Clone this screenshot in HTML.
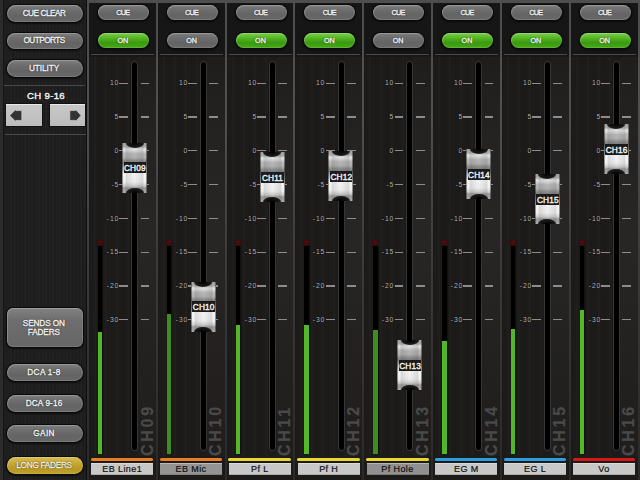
<!DOCTYPE html><html><head><meta charset="utf-8"><style>
*{margin:0;padding:0;box-sizing:border-box}
html,body{width:640px;height:480px;overflow:hidden;background:#111}
body{position:relative;font-family:"Liberation Sans",sans-serif}
.abs{position:absolute}
#left{position:absolute;left:0;top:0;width:87px;height:480px;
 background:repeating-linear-gradient(90deg,#202020 0 2px,#1c1c1c 2px 3px,#212121 3px 5px,#1d1d1d 5px 7px);}
#leftedge{position:absolute;left:0;top:0;width:3px;height:480px;background:#2c2c2c;box-shadow:1px 0 1px #141414}
.pill{position:absolute;border-radius:9px;color:#f4f4f4;font-weight:normal;-webkit-text-stroke:0.35px #f4f4f4;text-align:center;letter-spacing:-0.3px;
 background:linear-gradient(#7e7e7e 0%,#6e6e6e 30%,#646464 65%,#686868 100%);
 box-shadow:0 0 0 1px #0a0a0a,0 1px 2px 1px rgba(0,0,0,.6),inset 0 0 0 1px rgba(255,255,255,.12),inset 1px 1px 1px rgba(255,255,255,.12);text-shadow:0 0 1.5px rgba(0,0,0,.9),0 0 1px rgba(0,0,0,.7)}
.green{background:linear-gradient(#7ad04a 0%,#4fb01e 40%,#3a9a10 65%,#48a818 100%);color:#f0fff0}
.gold{background:linear-gradient(#d8bc50 0%,#c8a830 40%,#b89820 70%,#c0a030 100%);color:#f2e8c4}
.div{position:absolute;top:0;width:2px;height:480px;box-shadow:-1px 0 1px rgba(0,0,0,.5),1px 0 1px rgba(0,0,0,.5);background:linear-gradient(#4e4e4e 0,#505050 120px,#3c3c3c 250px,#333 360px,#2a2a2a 470px)}
.strip{position:absolute;top:0;height:480px;background:#1c1b1a}
.top{position:absolute;left:0;top:0;right:0;height:54px;background:#161616}
.sep{position:absolute;height:1px;background:#4a4a4a}
.track{position:absolute;width:5px;background:#000;border-radius:2.5px;box-shadow:0 0 0 1px #363636}
.mk{position:absolute;font-size:13.5px;color:#b4b4b4;text-shadow:0 0 2px #000;text-align:right;width:48px;letter-spacing:1.6px;line-height:13px;transform:scale(0.5);transform-origin:100% 50%}
.dash{position:absolute;height:1.3px;background:#8c8c8c}
.meter{position:absolute;width:4.4px;background:#000;box-shadow:1px 0 1px rgba(0,0,0,.4)}
.green-m{position:absolute;width:4.4px;background:#52b828}
.led{position:absolute;width:6px;height:5px;border-radius:3px;background:#4a0c0c;box-shadow:0 0 1px #300}
.chv{position:absolute;font-weight:bold;font-size:16px;color:#4a4a4a;letter-spacing:2.75px;-webkit-text-stroke:0.2px #4a4a4a;
 transform-origin:0 0;transform:rotate(-90deg);white-space:nowrap;line-height:12px}
.cbar{position:absolute;height:3.5px;border-radius:2px}
.name{position:absolute;height:12.5px;font-size:9px;color:#111;text-align:center;line-height:13px;letter-spacing:0.4px;-webkit-text-stroke:0.2px #111;
 box-shadow:inset 0 1px 0 rgba(255,255,255,.35),inset 0 -1px 0 rgba(0,0,0,.15)}
.knob{position:absolute;width:25px;height:50px;overflow:hidden;
 background:linear-gradient(90deg,#3a3a3a 0,#e8e8e8 1px,#fff 2px,#dcdcdc 4.5px,#f4f4f4 50%,#dcdcdc 20.5px,#fff 23px,#e8e8e8 24px,#3a3a3a 25px),
 linear-gradient(180deg,#a4a4a4 0,#b4b4b4 4px,#ececec 6px,#dedede 8px,#c0c0c0 10.5px,#b8b8b8 14.5px,#959595 17.5px,#858585 19.8px,#fff 30.6px,#f8f8f8 39px,#d4d4d4 43px,#a0a0a0 45px,#b0b0b0 50px);
 background-blend-mode:multiply}
.klab{position:absolute;left:1.5px;right:1px;top:19.8px;height:10.8px;background:#1a1a1a;color:#f0f0f0;
 font-size:8.3px;font-weight:normal;-webkit-text-stroke:0.4px #f0f0f0;text-align:center;line-height:12px;letter-spacing:0.15px;text-indent:0.15px;overflow:hidden;white-space:nowrap}
.kcap{position:absolute;left:3.5px;width:18px;height:10px;border-radius:50%;background:radial-gradient(ellipse at 50% 50%,#000 0,#1a1a1a 60%,#2a2a2a 100%)}
</style></head><body>
<div id="left"></div><div id="leftedge"></div>
<div class="pill " style="left:6.5px;top:5px;width:76.5px;height:17px;font-size:8.2px;line-height:17px;letter-spacing:-0.45px;"><span style="position:relative;top:0px;left:-0.7px">CUE CLEAR</span></div>
<div class="pill " style="left:6.5px;top:32.5px;width:76.5px;height:16.5px;font-size:8.2px;line-height:16.5px;letter-spacing:-0.5px;"><span style="position:relative;top:0.4px;left:-0.7px">OUTPORTS</span></div>
<div class="pill " style="left:6.5px;top:60px;width:76.5px;height:17px;font-size:8.2px;line-height:17px;letter-spacing:-0.05px;"><span style="position:relative;top:-0.3px;left:-0.7px">UTILITY</span></div>
<div class="sep" style="left:4px;top:85px;width:81px;height:1px"></div>
<div class="abs" style="left:2px;top:89.6px;width:88px;text-align:center;font-size:9.6px;font-weight:normal;color:#f4f4f4;-webkit-text-stroke:0.4px #f4f4f4;line-height:12px;letter-spacing:0.3px;text-shadow:0 0 1px #000">CH 9-16</div>
<div class="abs" style="left:6px;top:104px;width:35.5px;height:22.3px;background:linear-gradient(#c8c8c8,#bcbcbc);box-shadow:0 0 0 1px #111,inset 0 1px 0 #e8e8e8"></div>
<div class="abs" style="left:50px;top:104px;width:35px;height:22.3px;background:linear-gradient(#c8c8c8,#bcbcbc);box-shadow:0 0 0 1px #111,inset 0 1px 0 #e8e8e8"></div>
<svg class="abs" style="left:0;top:0" width="88" height="140"><path d="M9.8,115.5 L15.8,109.3 L15.8,110.6 L21.8,110.6 L21.8,120.4 L15.8,120.4 L15.8,121.7 Z" fill="#333" stroke="#ddd" stroke-width="0.6"/><path d="M81,115.5 L75.5,109.3 L75.5,110.6 L69.8,110.6 L69.8,120.4 L75.5,120.4 L75.5,121.7 Z" fill="#333" stroke="#ddd" stroke-width="0.6"/></svg>
<div class="sep" style="left:5px;top:133.5px;width:81px;height:1.5px"></div>
<div class="pill " style="left:6.5px;top:307.5px;width:76px;height:39.7px;font-size:8.2px;line-height:39.7px;letter-spacing:-0.1px;border-radius:6px;line-height:9px;padding-top:11.6px;background:linear-gradient(#828282 0,#6e6e6e 12px,#666 100%)"><span style="position:relative;top:0px;left:-0.7px">SENDS ON<br>FADERS</span></div>
<div class="pill " style="left:6.5px;top:364px;width:76.5px;height:17px;font-size:8.2px;line-height:17px;letter-spacing:0.35px;"><span style="position:relative;top:-0.4px;left:-0.7px">DCA 1-8</span></div>
<div class="pill " style="left:6.5px;top:395px;width:76.5px;height:17px;font-size:8.2px;line-height:17px;letter-spacing:0.15px;"><span style="position:relative;top:0px;left:-0.7px">DCA 9-16</span></div>
<div class="pill " style="left:6.5px;top:425px;width:76.5px;height:17px;font-size:8.2px;line-height:17px;letter-spacing:0.4px;"><span style="position:relative;top:0px;left:-0.7px">GAIN</span></div>
<div class="pill gold" style="left:6.5px;top:456.5px;width:76.5px;height:17px;font-size:8.2px;line-height:17px;letter-spacing:-0.25px;"><span style="position:relative;top:0px;left:-0.7px">LONG FADERS</span></div>
<div class="div" style="left:87.0px"></div>
<div class="div" style="left:155.82999999999998px"></div>
<div class="div" style="left:224.66px"></div>
<div class="div" style="left:293.49px"></div>
<div class="div" style="left:362.32px"></div>
<div class="div" style="left:431.15px"></div>
<div class="div" style="left:499.98px"></div>
<div class="div" style="left:568.81px"></div>
<div class="abs" style="left:637px;top:0;width:3px;height:480px;background:linear-gradient(#4e4e4e 0,#505050 120px,#3c3c3c 250px,#333 360px,#2a2a2a 470px)"></div>
<div class="abs" style="left:87px;top:0;width:553px;height:3px;background:#4e4e4e"></div>
<div class="strip" style="left:89.0px;top:3px;width:66.83px;height:477px"><div class="top"></div><div class="pill " style="left:9px;top:2px;width:51px;height:15px;font-size:7.2px;line-height:15px;letter-spacing:-0.7px;"><span style="position:relative;top:0px;left:-0.7px">CUE</span></div><div class="pill green" style="left:9px;top:30px;width:51px;height:15px;font-size:7.2px;line-height:15px;letter-spacing:0px;"><span style="position:relative;top:0px;left:-0.7px">ON</span></div><div class="sep" style="left:2px;top:51px;width:63px"></div></div>
<div class="abs" style="left:138.0px;top:56px;width:17.83px;height:400px;background:linear-gradient(rgba(255,255,255,.01) 0,rgba(255,255,255,.035) 80px,rgba(255,255,255,.05) 180px,rgba(255,255,255,.03) 280px,rgba(255,255,255,.01) 400px)"></div>
<div class="abs" style="left:89.0px;top:56px;width:42px;height:400px;background:repeating-linear-gradient(90deg,rgba(0,0,0,.07) 0 1px,transparent 1px 5px,rgba(255,255,255,.015) 5px 7px,transparent 7px 11px)"></div>
<div class="track" style="left:132.1px;top:61.5px;height:388.5px"></div>
<div class="mk" style="left:71.0px;top:76.4px">10</div>
<div class="dash" style="left:119.25px;top:82.55px;width:8.8px"></div>
<div class="dash" style="left:140.5px;top:82.55px;width:8.8px"></div>
<div class="mk" style="left:71.0px;top:110.2px">5</div>
<div class="dash" style="left:119.25px;top:116.35px;width:8.8px"></div>
<div class="dash" style="left:140.5px;top:116.35px;width:8.8px"></div>
<div class="mk" style="left:71.0px;top:144.0px">0</div>
<div class="dash" style="left:119.25px;top:150.15px;width:8.8px"></div>
<div class="dash" style="left:140.5px;top:150.15px;width:8.8px"></div>
<div class="mk" style="left:71.0px;top:177.79999999999998px">-5</div>
<div class="dash" style="left:119.25px;top:183.95px;width:8.8px"></div>
<div class="dash" style="left:140.5px;top:183.95px;width:8.8px"></div>
<div class="mk" style="left:71.0px;top:211.6px">-10</div>
<div class="dash" style="left:119.25px;top:217.75px;width:8.8px"></div>
<div class="dash" style="left:140.5px;top:217.75px;width:8.8px"></div>
<div class="mk" style="left:71.0px;top:245.39999999999998px">-15</div>
<div class="dash" style="left:119.25px;top:251.54999999999998px;width:8.8px"></div>
<div class="dash" style="left:140.5px;top:251.54999999999998px;width:8.8px"></div>
<div class="mk" style="left:71.0px;top:279.2px">-20</div>
<div class="dash" style="left:119.25px;top:285.35px;width:8.8px"></div>
<div class="dash" style="left:140.5px;top:285.35px;width:8.8px"></div>
<div class="mk" style="left:71.0px;top:313.0px">-30</div>
<div class="dash" style="left:119.25px;top:319.15000000000003px;width:8.8px"></div>
<div class="dash" style="left:140.5px;top:319.15000000000003px;width:8.8px"></div>
<div class="led" style="left:97.0px;top:240px"></div>
<div class="meter" style="left:98.0px;top:246px;height:208px"></div>
<div class="green-m" style="left:98.0px;top:331.7px;height:122.30000000000001px;background:#52b828"></div>
<div class="chv" style="left:141.5px;top:456px">CH09</div>
<div class="cbar" style="left:90.75px;top:457.5px;width:62.5px;background:#ea7e20"></div>
<div class="name" style="left:91.2px;top:462.5px;width:62px;background:#c8c8c8">EB Line1</div>
<div class="knob" style="left:122.0px;top:142.5px"><div class="kcap" style="top:-5px"></div><div class="kcap" style="bottom:-5px"></div><div class="klab">CH09</div></div>
<div class="strip" style="left:157.82999999999998px;top:3px;width:66.83px;height:477px"><div class="top"></div><div class="pill " style="left:9px;top:2px;width:51px;height:15px;font-size:7.2px;line-height:15px;letter-spacing:-0.7px;"><span style="position:relative;top:0px;left:-0.7px">CUE</span></div><div class="pill " style="left:9px;top:30px;width:51px;height:15px;font-size:7.2px;line-height:15px;letter-spacing:0px;"><span style="position:relative;top:0px;left:-0.7px">ON</span></div><div class="sep" style="left:2px;top:51px;width:63px"></div></div>
<div class="abs" style="left:206.82999999999998px;top:56px;width:17.83px;height:400px;background:linear-gradient(rgba(255,255,255,.01) 0,rgba(255,255,255,.035) 80px,rgba(255,255,255,.05) 180px,rgba(255,255,255,.03) 280px,rgba(255,255,255,.01) 400px)"></div>
<div class="abs" style="left:157.82999999999998px;top:56px;width:42px;height:400px;background:repeating-linear-gradient(90deg,rgba(0,0,0,.07) 0 1px,transparent 1px 5px,rgba(255,255,255,.015) 5px 7px,transparent 7px 11px)"></div>
<div class="track" style="left:200.92999999999998px;top:61.5px;height:388.5px"></div>
<div class="mk" style="left:139.82999999999998px;top:76.4px">10</div>
<div class="dash" style="left:188.07999999999998px;top:82.55px;width:8.8px"></div>
<div class="dash" style="left:209.32999999999998px;top:82.55px;width:8.8px"></div>
<div class="mk" style="left:139.82999999999998px;top:110.2px">5</div>
<div class="dash" style="left:188.07999999999998px;top:116.35px;width:8.8px"></div>
<div class="dash" style="left:209.32999999999998px;top:116.35px;width:8.8px"></div>
<div class="mk" style="left:139.82999999999998px;top:144.0px">0</div>
<div class="dash" style="left:188.07999999999998px;top:150.15px;width:8.8px"></div>
<div class="dash" style="left:209.32999999999998px;top:150.15px;width:8.8px"></div>
<div class="mk" style="left:139.82999999999998px;top:177.79999999999998px">-5</div>
<div class="dash" style="left:188.07999999999998px;top:183.95px;width:8.8px"></div>
<div class="dash" style="left:209.32999999999998px;top:183.95px;width:8.8px"></div>
<div class="mk" style="left:139.82999999999998px;top:211.6px">-10</div>
<div class="dash" style="left:188.07999999999998px;top:217.75px;width:8.8px"></div>
<div class="dash" style="left:209.32999999999998px;top:217.75px;width:8.8px"></div>
<div class="mk" style="left:139.82999999999998px;top:245.39999999999998px">-15</div>
<div class="dash" style="left:188.07999999999998px;top:251.54999999999998px;width:8.8px"></div>
<div class="dash" style="left:209.32999999999998px;top:251.54999999999998px;width:8.8px"></div>
<div class="mk" style="left:139.82999999999998px;top:279.2px">-20</div>
<div class="dash" style="left:188.07999999999998px;top:285.35px;width:8.8px"></div>
<div class="dash" style="left:209.32999999999998px;top:285.35px;width:8.8px"></div>
<div class="mk" style="left:139.82999999999998px;top:313.0px">-30</div>
<div class="dash" style="left:188.07999999999998px;top:319.15000000000003px;width:8.8px"></div>
<div class="dash" style="left:209.32999999999998px;top:319.15000000000003px;width:8.8px"></div>
<div class="led" style="left:165.82999999999998px;top:240px"></div>
<div class="meter" style="left:166.82999999999998px;top:246px;height:208px"></div>
<div class="green-m" style="left:166.82999999999998px;top:314px;height:140px;background:#3e8e1e"></div>
<div class="chv" style="left:210.32999999999998px;top:456px">CH10</div>
<div class="cbar" style="left:159.57999999999998px;top:457.5px;width:62.5px;background:#ea7e20"></div>
<div class="name" style="left:160.02999999999997px;top:462.5px;width:62px;background:#949494">EB Mic</div>
<div class="knob" style="left:190.82999999999998px;top:281.5px"><div class="kcap" style="top:-5px"></div><div class="kcap" style="bottom:-5px"></div><div class="klab">CH10</div></div>
<div class="strip" style="left:226.66px;top:3px;width:66.83px;height:477px"><div class="top"></div><div class="pill " style="left:9px;top:2px;width:51px;height:15px;font-size:7.2px;line-height:15px;letter-spacing:-0.7px;"><span style="position:relative;top:0px;left:-0.7px">CUE</span></div><div class="pill green" style="left:9px;top:30px;width:51px;height:15px;font-size:7.2px;line-height:15px;letter-spacing:0px;"><span style="position:relative;top:0px;left:-0.7px">ON</span></div><div class="sep" style="left:2px;top:51px;width:63px"></div></div>
<div class="abs" style="left:275.65999999999997px;top:56px;width:17.83px;height:400px;background:linear-gradient(rgba(255,255,255,.01) 0,rgba(255,255,255,.035) 80px,rgba(255,255,255,.05) 180px,rgba(255,255,255,.03) 280px,rgba(255,255,255,.01) 400px)"></div>
<div class="abs" style="left:226.66px;top:56px;width:42px;height:400px;background:repeating-linear-gradient(90deg,rgba(0,0,0,.07) 0 1px,transparent 1px 5px,rgba(255,255,255,.015) 5px 7px,transparent 7px 11px)"></div>
<div class="track" style="left:269.76px;top:61.5px;height:388.5px"></div>
<div class="mk" style="left:208.65999999999997px;top:76.4px">10</div>
<div class="dash" style="left:256.90999999999997px;top:82.55px;width:8.8px"></div>
<div class="dash" style="left:278.15999999999997px;top:82.55px;width:8.8px"></div>
<div class="mk" style="left:208.65999999999997px;top:110.2px">5</div>
<div class="dash" style="left:256.90999999999997px;top:116.35px;width:8.8px"></div>
<div class="dash" style="left:278.15999999999997px;top:116.35px;width:8.8px"></div>
<div class="mk" style="left:208.65999999999997px;top:144.0px">0</div>
<div class="dash" style="left:256.90999999999997px;top:150.15px;width:8.8px"></div>
<div class="dash" style="left:278.15999999999997px;top:150.15px;width:8.8px"></div>
<div class="mk" style="left:208.65999999999997px;top:177.79999999999998px">-5</div>
<div class="dash" style="left:256.90999999999997px;top:183.95px;width:8.8px"></div>
<div class="dash" style="left:278.15999999999997px;top:183.95px;width:8.8px"></div>
<div class="mk" style="left:208.65999999999997px;top:211.6px">-10</div>
<div class="dash" style="left:256.90999999999997px;top:217.75px;width:8.8px"></div>
<div class="dash" style="left:278.15999999999997px;top:217.75px;width:8.8px"></div>
<div class="mk" style="left:208.65999999999997px;top:245.39999999999998px">-15</div>
<div class="dash" style="left:256.90999999999997px;top:251.54999999999998px;width:8.8px"></div>
<div class="dash" style="left:278.15999999999997px;top:251.54999999999998px;width:8.8px"></div>
<div class="mk" style="left:208.65999999999997px;top:279.2px">-20</div>
<div class="dash" style="left:256.90999999999997px;top:285.35px;width:8.8px"></div>
<div class="dash" style="left:278.15999999999997px;top:285.35px;width:8.8px"></div>
<div class="mk" style="left:208.65999999999997px;top:313.0px">-30</div>
<div class="dash" style="left:256.90999999999997px;top:319.15000000000003px;width:8.8px"></div>
<div class="dash" style="left:278.15999999999997px;top:319.15000000000003px;width:8.8px"></div>
<div class="led" style="left:234.66px;top:240px"></div>
<div class="meter" style="left:235.66px;top:246px;height:208px"></div>
<div class="green-m" style="left:235.66px;top:325px;height:129px;background:#52b828"></div>
<div class="chv" style="left:279.15999999999997px;top:456px">CH11</div>
<div class="cbar" style="left:228.41px;top:457.5px;width:62.5px;background:#e8d830"></div>
<div class="name" style="left:228.85999999999999px;top:462.5px;width:62px;background:#c8c8c8">Pf L</div>
<div class="knob" style="left:259.65999999999997px;top:152px"><div class="kcap" style="top:-5px"></div><div class="kcap" style="bottom:-5px"></div><div class="klab">CH11</div></div>
<div class="strip" style="left:295.49px;top:3px;width:66.83px;height:477px"><div class="top"></div><div class="pill " style="left:9px;top:2px;width:51px;height:15px;font-size:7.2px;line-height:15px;letter-spacing:-0.7px;"><span style="position:relative;top:0px;left:-0.7px">CUE</span></div><div class="pill green" style="left:9px;top:30px;width:51px;height:15px;font-size:7.2px;line-height:15px;letter-spacing:0px;"><span style="position:relative;top:0px;left:-0.7px">ON</span></div><div class="sep" style="left:2px;top:51px;width:63px"></div></div>
<div class="abs" style="left:344.49px;top:56px;width:17.83px;height:400px;background:linear-gradient(rgba(255,255,255,.01) 0,rgba(255,255,255,.035) 80px,rgba(255,255,255,.05) 180px,rgba(255,255,255,.03) 280px,rgba(255,255,255,.01) 400px)"></div>
<div class="abs" style="left:295.49px;top:56px;width:42px;height:400px;background:repeating-linear-gradient(90deg,rgba(0,0,0,.07) 0 1px,transparent 1px 5px,rgba(255,255,255,.015) 5px 7px,transparent 7px 11px)"></div>
<div class="track" style="left:338.59000000000003px;top:61.5px;height:388.5px"></div>
<div class="mk" style="left:277.49px;top:76.4px">10</div>
<div class="dash" style="left:325.74px;top:82.55px;width:8.8px"></div>
<div class="dash" style="left:346.99px;top:82.55px;width:8.8px"></div>
<div class="mk" style="left:277.49px;top:110.2px">5</div>
<div class="dash" style="left:325.74px;top:116.35px;width:8.8px"></div>
<div class="dash" style="left:346.99px;top:116.35px;width:8.8px"></div>
<div class="mk" style="left:277.49px;top:144.0px">0</div>
<div class="dash" style="left:325.74px;top:150.15px;width:8.8px"></div>
<div class="dash" style="left:346.99px;top:150.15px;width:8.8px"></div>
<div class="mk" style="left:277.49px;top:177.79999999999998px">-5</div>
<div class="dash" style="left:325.74px;top:183.95px;width:8.8px"></div>
<div class="dash" style="left:346.99px;top:183.95px;width:8.8px"></div>
<div class="mk" style="left:277.49px;top:211.6px">-10</div>
<div class="dash" style="left:325.74px;top:217.75px;width:8.8px"></div>
<div class="dash" style="left:346.99px;top:217.75px;width:8.8px"></div>
<div class="mk" style="left:277.49px;top:245.39999999999998px">-15</div>
<div class="dash" style="left:325.74px;top:251.54999999999998px;width:8.8px"></div>
<div class="dash" style="left:346.99px;top:251.54999999999998px;width:8.8px"></div>
<div class="mk" style="left:277.49px;top:279.2px">-20</div>
<div class="dash" style="left:325.74px;top:285.35px;width:8.8px"></div>
<div class="dash" style="left:346.99px;top:285.35px;width:8.8px"></div>
<div class="mk" style="left:277.49px;top:313.0px">-30</div>
<div class="dash" style="left:325.74px;top:319.15000000000003px;width:8.8px"></div>
<div class="dash" style="left:346.99px;top:319.15000000000003px;width:8.8px"></div>
<div class="led" style="left:303.49px;top:240px"></div>
<div class="meter" style="left:304.49px;top:246px;height:208px"></div>
<div class="green-m" style="left:304.49px;top:325px;height:129px;background:#52b828"></div>
<div class="chv" style="left:347.99px;top:456px">CH12</div>
<div class="cbar" style="left:297.24px;top:457.5px;width:62.5px;background:#e8d830"></div>
<div class="name" style="left:297.69px;top:462.5px;width:62px;background:#c8c8c8">Pf H</div>
<div class="knob" style="left:328.49px;top:151px"><div class="kcap" style="top:-5px"></div><div class="kcap" style="bottom:-5px"></div><div class="klab">CH12</div></div>
<div class="strip" style="left:364.32px;top:3px;width:66.83px;height:477px"><div class="top"></div><div class="pill " style="left:9px;top:2px;width:51px;height:15px;font-size:7.2px;line-height:15px;letter-spacing:-0.7px;"><span style="position:relative;top:0px;left:-0.7px">CUE</span></div><div class="pill " style="left:9px;top:30px;width:51px;height:15px;font-size:7.2px;line-height:15px;letter-spacing:0px;"><span style="position:relative;top:0px;left:-0.7px">ON</span></div><div class="sep" style="left:2px;top:51px;width:63px"></div></div>
<div class="abs" style="left:413.32px;top:56px;width:17.83px;height:400px;background:linear-gradient(rgba(255,255,255,.01) 0,rgba(255,255,255,.035) 80px,rgba(255,255,255,.05) 180px,rgba(255,255,255,.03) 280px,rgba(255,255,255,.01) 400px)"></div>
<div class="abs" style="left:364.32px;top:56px;width:42px;height:400px;background:repeating-linear-gradient(90deg,rgba(0,0,0,.07) 0 1px,transparent 1px 5px,rgba(255,255,255,.015) 5px 7px,transparent 7px 11px)"></div>
<div class="track" style="left:407.42px;top:61.5px;height:388.5px"></div>
<div class="mk" style="left:346.32px;top:76.4px">10</div>
<div class="dash" style="left:394.57px;top:82.55px;width:8.8px"></div>
<div class="dash" style="left:415.82px;top:82.55px;width:8.8px"></div>
<div class="mk" style="left:346.32px;top:110.2px">5</div>
<div class="dash" style="left:394.57px;top:116.35px;width:8.8px"></div>
<div class="dash" style="left:415.82px;top:116.35px;width:8.8px"></div>
<div class="mk" style="left:346.32px;top:144.0px">0</div>
<div class="dash" style="left:394.57px;top:150.15px;width:8.8px"></div>
<div class="dash" style="left:415.82px;top:150.15px;width:8.8px"></div>
<div class="mk" style="left:346.32px;top:177.79999999999998px">-5</div>
<div class="dash" style="left:394.57px;top:183.95px;width:8.8px"></div>
<div class="dash" style="left:415.82px;top:183.95px;width:8.8px"></div>
<div class="mk" style="left:346.32px;top:211.6px">-10</div>
<div class="dash" style="left:394.57px;top:217.75px;width:8.8px"></div>
<div class="dash" style="left:415.82px;top:217.75px;width:8.8px"></div>
<div class="mk" style="left:346.32px;top:245.39999999999998px">-15</div>
<div class="dash" style="left:394.57px;top:251.54999999999998px;width:8.8px"></div>
<div class="dash" style="left:415.82px;top:251.54999999999998px;width:8.8px"></div>
<div class="mk" style="left:346.32px;top:279.2px">-20</div>
<div class="dash" style="left:394.57px;top:285.35px;width:8.8px"></div>
<div class="dash" style="left:415.82px;top:285.35px;width:8.8px"></div>
<div class="mk" style="left:346.32px;top:313.0px">-30</div>
<div class="dash" style="left:394.57px;top:319.15000000000003px;width:8.8px"></div>
<div class="dash" style="left:415.82px;top:319.15000000000003px;width:8.8px"></div>
<div class="led" style="left:372.32px;top:240px"></div>
<div class="meter" style="left:373.32px;top:246px;height:208px"></div>
<div class="green-m" style="left:373.32px;top:330px;height:124px;background:#3e8e1e"></div>
<div class="chv" style="left:416.82px;top:456px">CH13</div>
<div class="cbar" style="left:366.07px;top:457.5px;width:62.5px;background:#e8d830"></div>
<div class="name" style="left:366.52px;top:462.5px;width:62px;background:#909090">Pf Hole</div>
<div class="knob" style="left:397.32px;top:340px"><div class="kcap" style="top:-5px"></div><div class="kcap" style="bottom:-5px"></div><div class="klab">CH13</div></div>
<div class="strip" style="left:433.15px;top:3px;width:66.83px;height:477px"><div class="top"></div><div class="pill " style="left:9px;top:2px;width:51px;height:15px;font-size:7.2px;line-height:15px;letter-spacing:-0.7px;"><span style="position:relative;top:0px;left:-0.7px">CUE</span></div><div class="pill green" style="left:9px;top:30px;width:51px;height:15px;font-size:7.2px;line-height:15px;letter-spacing:0px;"><span style="position:relative;top:0px;left:-0.7px">ON</span></div><div class="sep" style="left:2px;top:51px;width:63px"></div></div>
<div class="abs" style="left:482.15px;top:56px;width:17.83px;height:400px;background:linear-gradient(rgba(255,255,255,.01) 0,rgba(255,255,255,.035) 80px,rgba(255,255,255,.05) 180px,rgba(255,255,255,.03) 280px,rgba(255,255,255,.01) 400px)"></div>
<div class="abs" style="left:433.15px;top:56px;width:42px;height:400px;background:repeating-linear-gradient(90deg,rgba(0,0,0,.07) 0 1px,transparent 1px 5px,rgba(255,255,255,.015) 5px 7px,transparent 7px 11px)"></div>
<div class="track" style="left:476.25px;top:61.5px;height:388.5px"></div>
<div class="mk" style="left:415.15px;top:76.4px">10</div>
<div class="dash" style="left:463.4px;top:82.55px;width:8.8px"></div>
<div class="dash" style="left:484.65px;top:82.55px;width:8.8px"></div>
<div class="mk" style="left:415.15px;top:110.2px">5</div>
<div class="dash" style="left:463.4px;top:116.35px;width:8.8px"></div>
<div class="dash" style="left:484.65px;top:116.35px;width:8.8px"></div>
<div class="mk" style="left:415.15px;top:144.0px">0</div>
<div class="dash" style="left:463.4px;top:150.15px;width:8.8px"></div>
<div class="dash" style="left:484.65px;top:150.15px;width:8.8px"></div>
<div class="mk" style="left:415.15px;top:177.79999999999998px">-5</div>
<div class="dash" style="left:463.4px;top:183.95px;width:8.8px"></div>
<div class="dash" style="left:484.65px;top:183.95px;width:8.8px"></div>
<div class="mk" style="left:415.15px;top:211.6px">-10</div>
<div class="dash" style="left:463.4px;top:217.75px;width:8.8px"></div>
<div class="dash" style="left:484.65px;top:217.75px;width:8.8px"></div>
<div class="mk" style="left:415.15px;top:245.39999999999998px">-15</div>
<div class="dash" style="left:463.4px;top:251.54999999999998px;width:8.8px"></div>
<div class="dash" style="left:484.65px;top:251.54999999999998px;width:8.8px"></div>
<div class="mk" style="left:415.15px;top:279.2px">-20</div>
<div class="dash" style="left:463.4px;top:285.35px;width:8.8px"></div>
<div class="dash" style="left:484.65px;top:285.35px;width:8.8px"></div>
<div class="mk" style="left:415.15px;top:313.0px">-30</div>
<div class="dash" style="left:463.4px;top:319.15000000000003px;width:8.8px"></div>
<div class="dash" style="left:484.65px;top:319.15000000000003px;width:8.8px"></div>
<div class="led" style="left:441.15px;top:240px"></div>
<div class="meter" style="left:442.15px;top:246px;height:208px"></div>
<div class="green-m" style="left:442.15px;top:340.7px;height:113.30000000000001px;background:#52b828"></div>
<div class="chv" style="left:485.65px;top:456px">CH14</div>
<div class="cbar" style="left:434.9px;top:457.5px;width:62.5px;background:#2aa0e0"></div>
<div class="name" style="left:435.34999999999997px;top:462.5px;width:62px;background:#c8c8c8">EG M</div>
<div class="knob" style="left:466.15px;top:149px"><div class="kcap" style="top:-5px"></div><div class="kcap" style="bottom:-5px"></div><div class="klab">CH14</div></div>
<div class="strip" style="left:501.98px;top:3px;width:66.83px;height:477px"><div class="top"></div><div class="pill " style="left:9px;top:2px;width:51px;height:15px;font-size:7.2px;line-height:15px;letter-spacing:-0.7px;"><span style="position:relative;top:0px;left:-0.7px">CUE</span></div><div class="pill green" style="left:9px;top:30px;width:51px;height:15px;font-size:7.2px;line-height:15px;letter-spacing:0px;"><span style="position:relative;top:0px;left:-0.7px">ON</span></div><div class="sep" style="left:2px;top:51px;width:63px"></div></div>
<div class="abs" style="left:550.98px;top:56px;width:17.83px;height:400px;background:linear-gradient(rgba(255,255,255,.01) 0,rgba(255,255,255,.035) 80px,rgba(255,255,255,.05) 180px,rgba(255,255,255,.03) 280px,rgba(255,255,255,.01) 400px)"></div>
<div class="abs" style="left:501.98px;top:56px;width:42px;height:400px;background:repeating-linear-gradient(90deg,rgba(0,0,0,.07) 0 1px,transparent 1px 5px,rgba(255,255,255,.015) 5px 7px,transparent 7px 11px)"></div>
<div class="track" style="left:545.08px;top:61.5px;height:388.5px"></div>
<div class="mk" style="left:483.98px;top:76.4px">10</div>
<div class="dash" style="left:532.23px;top:82.55px;width:8.8px"></div>
<div class="dash" style="left:553.48px;top:82.55px;width:8.8px"></div>
<div class="mk" style="left:483.98px;top:110.2px">5</div>
<div class="dash" style="left:532.23px;top:116.35px;width:8.8px"></div>
<div class="dash" style="left:553.48px;top:116.35px;width:8.8px"></div>
<div class="mk" style="left:483.98px;top:144.0px">0</div>
<div class="dash" style="left:532.23px;top:150.15px;width:8.8px"></div>
<div class="dash" style="left:553.48px;top:150.15px;width:8.8px"></div>
<div class="mk" style="left:483.98px;top:177.79999999999998px">-5</div>
<div class="dash" style="left:532.23px;top:183.95px;width:8.8px"></div>
<div class="dash" style="left:553.48px;top:183.95px;width:8.8px"></div>
<div class="mk" style="left:483.98px;top:211.6px">-10</div>
<div class="dash" style="left:532.23px;top:217.75px;width:8.8px"></div>
<div class="dash" style="left:553.48px;top:217.75px;width:8.8px"></div>
<div class="mk" style="left:483.98px;top:245.39999999999998px">-15</div>
<div class="dash" style="left:532.23px;top:251.54999999999998px;width:8.8px"></div>
<div class="dash" style="left:553.48px;top:251.54999999999998px;width:8.8px"></div>
<div class="mk" style="left:483.98px;top:279.2px">-20</div>
<div class="dash" style="left:532.23px;top:285.35px;width:8.8px"></div>
<div class="dash" style="left:553.48px;top:285.35px;width:8.8px"></div>
<div class="mk" style="left:483.98px;top:313.0px">-30</div>
<div class="dash" style="left:532.23px;top:319.15000000000003px;width:8.8px"></div>
<div class="dash" style="left:553.48px;top:319.15000000000003px;width:8.8px"></div>
<div class="led" style="left:509.98px;top:240px"></div>
<div class="meter" style="left:510.98px;top:246px;height:208px"></div>
<div class="green-m" style="left:510.98px;top:329px;height:125px;background:#52b828"></div>
<div class="chv" style="left:554.48px;top:456px">CH15</div>
<div class="cbar" style="left:503.73px;top:457.5px;width:62.5px;background:#2aa0e0"></div>
<div class="name" style="left:504.18px;top:462.5px;width:62px;background:#c8c8c8">EG L</div>
<div class="knob" style="left:534.98px;top:174px"><div class="kcap" style="top:-5px"></div><div class="kcap" style="bottom:-5px"></div><div class="klab">CH15</div></div>
<div class="strip" style="left:570.81px;top:3px;width:66.83px;height:477px"><div class="top"></div><div class="pill " style="left:9px;top:2px;width:51px;height:15px;font-size:7.2px;line-height:15px;letter-spacing:-0.7px;"><span style="position:relative;top:0px;left:-0.7px">CUE</span></div><div class="pill green" style="left:9px;top:30px;width:51px;height:15px;font-size:7.2px;line-height:15px;letter-spacing:0px;"><span style="position:relative;top:0px;left:-0.7px">ON</span></div><div class="sep" style="left:2px;top:51px;width:63px"></div></div>
<div class="abs" style="left:619.81px;top:56px;width:17.83px;height:400px;background:linear-gradient(rgba(255,255,255,.01) 0,rgba(255,255,255,.035) 80px,rgba(255,255,255,.05) 180px,rgba(255,255,255,.03) 280px,rgba(255,255,255,.01) 400px)"></div>
<div class="abs" style="left:570.81px;top:56px;width:42px;height:400px;background:repeating-linear-gradient(90deg,rgba(0,0,0,.07) 0 1px,transparent 1px 5px,rgba(255,255,255,.015) 5px 7px,transparent 7px 11px)"></div>
<div class="track" style="left:613.91px;top:61.5px;height:388.5px"></div>
<div class="mk" style="left:552.81px;top:76.4px">10</div>
<div class="dash" style="left:601.06px;top:82.55px;width:8.8px"></div>
<div class="dash" style="left:622.31px;top:82.55px;width:8.8px"></div>
<div class="mk" style="left:552.81px;top:110.2px">5</div>
<div class="dash" style="left:601.06px;top:116.35px;width:8.8px"></div>
<div class="dash" style="left:622.31px;top:116.35px;width:8.8px"></div>
<div class="mk" style="left:552.81px;top:144.0px">0</div>
<div class="dash" style="left:601.06px;top:150.15px;width:8.8px"></div>
<div class="dash" style="left:622.31px;top:150.15px;width:8.8px"></div>
<div class="mk" style="left:552.81px;top:177.79999999999998px">-5</div>
<div class="dash" style="left:601.06px;top:183.95px;width:8.8px"></div>
<div class="dash" style="left:622.31px;top:183.95px;width:8.8px"></div>
<div class="mk" style="left:552.81px;top:211.6px">-10</div>
<div class="dash" style="left:601.06px;top:217.75px;width:8.8px"></div>
<div class="dash" style="left:622.31px;top:217.75px;width:8.8px"></div>
<div class="mk" style="left:552.81px;top:245.39999999999998px">-15</div>
<div class="dash" style="left:601.06px;top:251.54999999999998px;width:8.8px"></div>
<div class="dash" style="left:622.31px;top:251.54999999999998px;width:8.8px"></div>
<div class="mk" style="left:552.81px;top:279.2px">-20</div>
<div class="dash" style="left:601.06px;top:285.35px;width:8.8px"></div>
<div class="dash" style="left:622.31px;top:285.35px;width:8.8px"></div>
<div class="mk" style="left:552.81px;top:313.0px">-30</div>
<div class="dash" style="left:601.06px;top:319.15000000000003px;width:8.8px"></div>
<div class="dash" style="left:622.31px;top:319.15000000000003px;width:8.8px"></div>
<div class="led" style="left:578.81px;top:240px"></div>
<div class="meter" style="left:579.81px;top:246px;height:208px"></div>
<div class="green-m" style="left:579.81px;top:310px;height:144px;background:#52b828"></div>
<div class="chv" style="left:623.31px;top:456px">CH16</div>
<div class="cbar" style="left:572.56px;top:457.5px;width:62.5px;background:#d81818"></div>
<div class="name" style="left:573.01px;top:462.5px;width:62px;background:#c8c8c8">Vo</div>
<div class="knob" style="left:603.81px;top:124px"><div class="kcap" style="top:-5px"></div><div class="kcap" style="bottom:-5px"></div><div class="klab">CH16</div></div>
</body></html>
